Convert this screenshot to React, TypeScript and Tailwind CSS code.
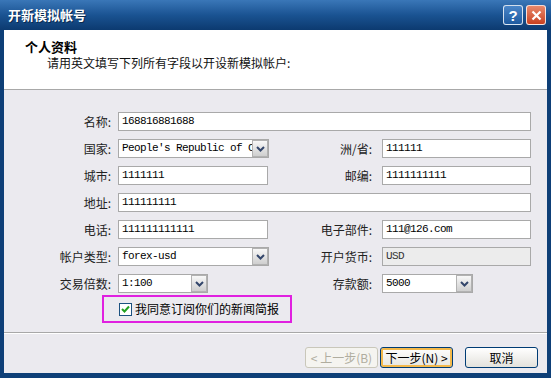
import React from 'react';

const cjk = "font-['Noto_Sans_CJK_SC','Noto_Sans',sans-serif]";
const mono = "font-['Liberation_Mono','Noto_Sans_CJK_SC',monospace]";

function Label({ text, w }: { text: string; w: string }) {
  return (
    <div className={`${w} shrink-0 text-right text-[12px] leading-[19px] text-[#222] ${cjk}`}>
      {text}
    </div>
  );
}

function TextBox({ value, w, disabled }: { value: string; w: string; disabled?: boolean }) {
  return (
    <div
      className={`${w} h-[19px] shrink-0 border border-[#a9a9a9] pl-[3px] overflow-hidden whitespace-nowrap text-[11px] leading-[17px] tracking-[-0.6px] ${mono} ${
        disabled ? 'bg-[#ececec] text-[#333]' : 'bg-white text-black'
      }`}
    >
      {value}
    </div>
  );
}

function DropArrow() {
  return (
    <div className="w-[16px] h-[17px] shrink-0 border border-[#b2b2b2] bg-gradient-to-b from-[#f8f8f8] to-[#cfcfcf] flex items-center justify-center">
      <svg width="9" height="6" viewBox="0 0 9 6">
        <path d="M1 1 L4.5 4.5 L8 1" fill="none" stroke="#33466b" strokeWidth="2" />
      </svg>
    </div>
  );
}

function Select({ value, w, h = 'h-[19px]' }: { value: string; w: string; h?: string }) {
  return (
    <div className={`${w} ${h} shrink-0 border border-[#a9a9a9] bg-white flex items-center`}>
      <div className={`flex-1 overflow-hidden whitespace-nowrap pl-[3px] text-[11px] tracking-[-0.6px] text-black ${mono}`}>
        {value}
      </div>
      <DropArrow />
    </div>
  );
}

function Row({ children }: { children: React.ReactNode }) {
  return <div className="flex items-center h-[19px]">{children}</div>;
}

export default function App() {
  return (
    <div className="w-[551px] h-[378px] bg-[#0e3f77] flex flex-col overflow-hidden">
      {/* title bar */}
      <div className="h-[30px] shrink-0 bg-gradient-to-b from-[#3a77b8] via-[#1a5392] to-[#0c3a70] flex items-center pl-[8px] pr-[5px]">
        <div className={`flex-1 text-white font-bold text-[13px] [text-shadow:1px_1px_0_#0a2a50] ${cjk}`}>开新模拟帐号</div>
        <div className="w-[20px] h-[20px] rounded-[3px] border border-white/80 bg-gradient-to-b from-[#4a86c8] to-[#1d5aa0] flex items-center justify-center text-white font-bold text-[15px] leading-none font-['Liberation_Sans',sans-serif]">
          ?
        </div>
        <div className="w-[20px] h-[20px] ml-[3px] rounded-[3px] border border-white/80 bg-gradient-to-b from-[#e8886a] to-[#c8401f] flex items-center justify-center">
          <svg width="11" height="11" viewBox="0 0 11 11">
            <path d="M1.5 1.5 L9.5 9.5 M9.5 1.5 L1.5 9.5" stroke="white" strokeWidth="2.2" />
          </svg>
        </div>
      </div>

      {/* body */}
      <div className="flex-1 mx-[4px] mb-[5px] bg-[#ebeaef] flex flex-col">
        <div className="h-[60px] shrink-0 bg-white border-b border-[#a8a8a8] pt-[9px]">
          <div className={`pl-[21px] text-[13px] font-bold leading-[16px] text-black ${cjk}`}>个人资料</div>
          <div className={`pl-[43px] text-[12px] leading-[16px] text-[#111] ${cjk}`}>请用英文填写下列所有字段以开设新模拟帐户:</div>
        </div>

        <div className="flex flex-col gap-[8px] pt-[22px]">
          <Row>
            <Label text="名称:" w="w-[107px]" />
            <div className="w-[7px]" />
            <TextBox value="168816881688" w="w-[413px]" />
          </Row>
          <Row>
            <Label text="国家:" w="w-[107px]" />
            <div className="w-[7px]" />
            <div className="w-[151px] shrink-0">
              <Select value="People's Republic of China" w="w-[151px]" />
            </div>
            <Label text="洲/省:" w="w-[103px]" />
            <div className="w-[10px]" />
            <TextBox value="111111" w="w-[149px]" />
          </Row>
          <Row>
            <Label text="城市:" w="w-[107px]" />
            <div className="w-[7px]" />
            <div className="w-[151px] shrink-0">
              <TextBox value="1111111" w="w-[150px]" />
            </div>
            <Label text="邮编:" w="w-[103px]" />
            <div className="w-[10px]" />
            <TextBox value="1111111111" w="w-[149px]" />
          </Row>
          <Row>
            <Label text="地址:" w="w-[107px]" />
            <div className="w-[7px]" />
            <TextBox value="111111111" w="w-[413px]" />
          </Row>
          <Row>
            <Label text="电话:" w="w-[107px]" />
            <div className="w-[7px]" />
            <div className="w-[151px] shrink-0">
              <TextBox value="111111111111" w="w-[150px]" />
            </div>
            <Label text="电子部件:" w="w-[103px]" />
            <div className="w-[10px]" />
            <TextBox value="111@126.com" w="w-[149px]" />
          </Row>
          <Row>
            <Label text="帐户类型:" w="w-[107px]" />
            <div className="w-[7px]" />
            <div className="w-[151px] shrink-0">
              <Select value="forex-usd" w="w-[151px]" />
            </div>
            <Label text="开户货币:" w="w-[103px]" />
            <div className="w-[10px]" />
            <TextBox value="USD" w="w-[149px]" disabled />
          </Row>
          <Row>
            <Label text="交易倍数:" w="w-[107px]" />
            <div className="w-[7px]" />
            <div className="w-[151px] shrink-0">
              <Select value="1:100" w="w-[90px]" />
            </div>
            <Label text="存款额:" w="w-[103px]" />
            <div className="w-[10px]" />
            <Select value="5000" w="w-[91px]" />
          </Row>
        </div>

        <div className="mt-[2px] ml-[98px] w-[190px] h-[28px] border-2 border-[#e020e0] flex items-center pl-[15px]">
          <div className="w-[13px] h-[13px] border border-[#1c5180] bg-white flex items-center justify-center">
            <svg width="9" height="8" viewBox="0 0 9 8">
              <path d="M1 4 L3.5 6.5 L8 1.5" fill="none" stroke="#21a121" strokeWidth="2" />
            </svg>
          </div>
          <div className={`ml-[3px] text-[12px] text-black ${cjk}`}>我同意订阅你们的新闻简报</div>
        </div>

        <div className="mt-[9px] border-t border-[#a8a8a8] border-b border-b-white" />

        <div className={`mt-[13px] flex justify-end pr-[9px] text-[12px] ${cjk}`}>
          <div className="w-[73px] h-[21px] rounded-[3px] border border-[#c9c7ba] bg-[#f5f4f0] text-[#b0ad9f] flex items-center justify-center">
            &lt; 上一步(B)
          </div>
          <div className="w-[73px] h-[21px] ml-[2px] rounded-[3px] border border-[#003c74] bg-gradient-to-b from-white to-[#e6e5de] shadow-[inset_0_0_0_2px_#f3b94c] text-black flex items-center justify-center">
            下一步(N) &gt;
          </div>
          <div className="w-[73px] h-[21px] ml-[12px] rounded-[3px] border border-[#003c74] bg-gradient-to-b from-white to-[#e3e2dc] text-black flex items-center justify-center">
            取消
          </div>
        </div>
      </div>
    </div>
  );
}
